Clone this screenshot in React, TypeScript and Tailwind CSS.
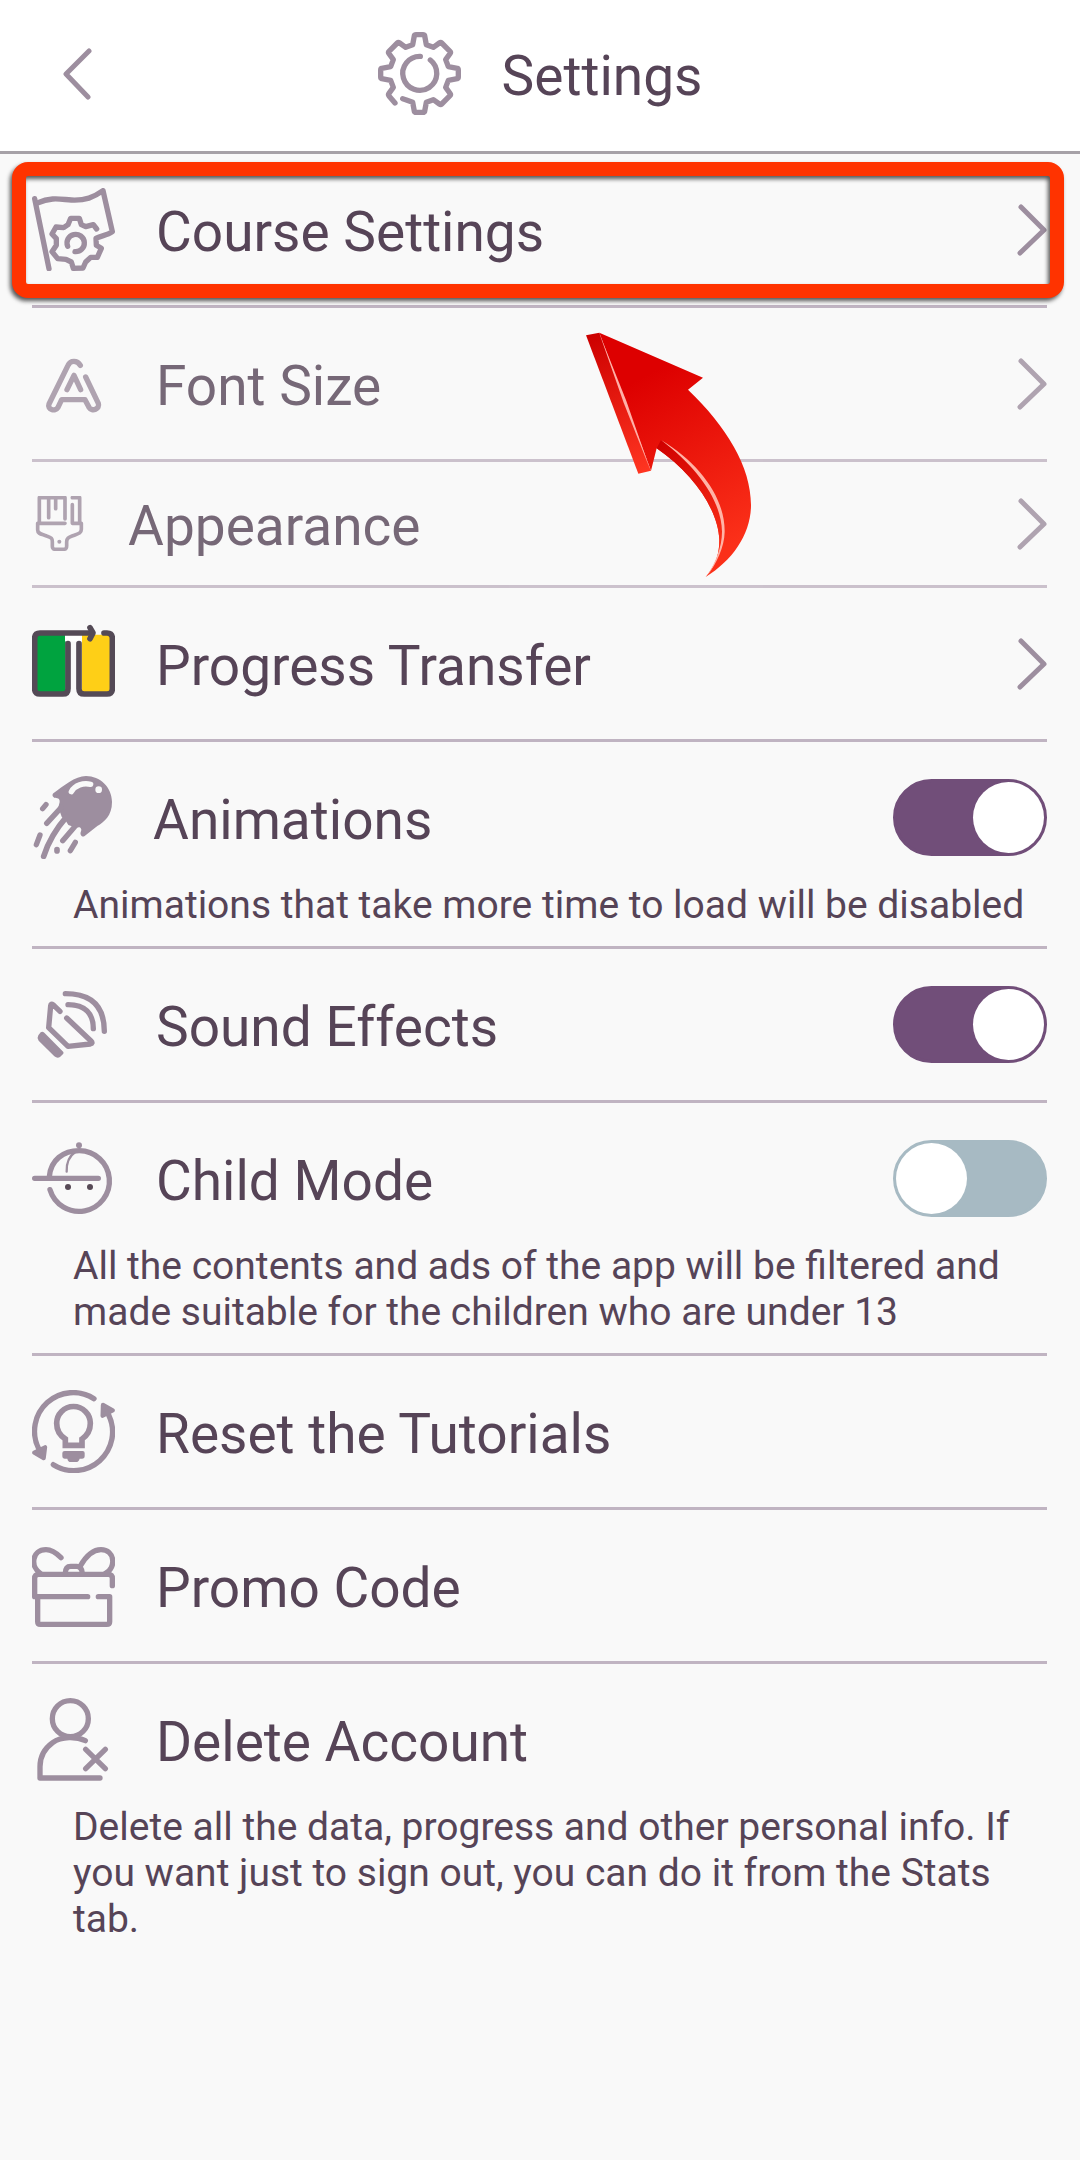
import { FC, ReactNode, useState } from "react";

// ICONS

interface IconProps {
    viewBox: string;
    className?: string;
    children: ReactNode;
}

const Icon: FC<IconProps> = ({ viewBox, className = "w-[83px] h-[83px]", children }) => (
    <svg
        viewBox={viewBox}
        className={`shrink-0 ${className}`}
        fill="none"
        stroke="#9d8e9f"
        strokeWidth="16"
        strokeLinecap="round"
        strokeLinejoin="round"
        aria-hidden="true"
    >
        {children}
    </svg>
);

const GearIcon = () => (
    <Icon viewBox="0 0 249 249">
        <path d="M74 200L83 203L104 211L109 238Q110 241 114 241H135Q139 241 140 238L145 211L166 203L184 216Q188 219 191 216L216 191Q219 188 216 184L203 166L211 145L238 140Q241 139 241 135V114Q241 110 238 109L211 104L203 83L216 65Q219 61 216 58L191 33Q188 30 184 33L166 46L145 38L140 11Q139 8 135 8H114Q110 8 109 11L104 38L83 46L65 33Q61 30 58 33L33 58Q30 61 33 65L46 83L38 104L11 109Q8 110 8 114V135Q8 139 11 140L38 145L46 166L33 184Q30 188 33 192L51 213" />
        <path d="M157 84A51 51 0 1 1 127 73" />
    </Icon>
);

const CourseIcon = () => (
    <Icon viewBox="0 0 249 249">
        <path d="M8 32L51 242" />
        <path d="M16 45C60 26 85 34 118 36C160 38 185 28 213 8L241 131C225 143 205 143 192 151L193 172L208 181L196 208L176 208L161 222L153 240L124 241L118 222L102 214L77 212L60 191L73 172L73 152L60 138L72 117L95 119L108 110L116 91H142L148 110L161 116L184 110L194 123" />
        <path d="M107 175A26 26 0 1 1 129 191" />
    </Icon>
);

const FontIcon = () => (
    <Icon viewBox="96 66 249 249">
        <path d="M241 136C232 120 211 120 204 136L147 252C141 268 165 277 174 262L185 239H255L267 262C276 277 301 266 295 250L257 171" />
        <path d="M201 209L222 166L242 209" />
    </Icon>
);

const BrushIcon = () => (
    <Icon viewBox="96 528 165 165" className="w-[55px] h-[55px]">
        <g strokeWidth="11">
            <path d="M118 606V533H195V597M146 535V593M167 535V566" />
            <path d="M195 610H113V630C113 642 125 642 140 648C155 653 157 656 157 665V678C157 686 160 688 167 688H190C198 688 200 685 200 677V665C200 655 205 652 218 647C235 641 244 640 244 628V610H217V554" />
            <path d="M217 533H239V606" />
        </g>
        <circle cx="178" cy="665" r="6" fill="#9d8e9f" stroke="none" />
    </Icon>
);

const TransferIcon = () => (
    <Icon viewBox="96 66 249 249">
        <g stroke="none">
            <path d="M108 104H197V276H108Z" fill="#00a33f" />
            <path d="M195 104H248V124H195Z" fill="#ffffff" />
            <path d="M246 104H332V276H246Z" fill="#fecf17" />
        </g>
        <g stroke="#544a56" strokeWidth="17">
            <path d="M204 131V266Q204 282 188 282H120Q104 282 104 266V115Q104 99 120 99H276" />
            <path d="M270 83L279 99L270 116" />
            <path d="M237 131V266Q237 282 253 282H321Q337 282 337 266V115Q337 99 321 99H312" />
        </g>
    </Icon>
);

const MeteorIcon = () => (
    <Icon viewBox="96 528 240 249" className="w-20 h-[83px]">
        <path
            d="M160 580C190 558 225 528 258 528C300 528 336 562 336 606C336 648 312 666 292 678L254 708C246 714 238 704 243 694C247 684 238 678 230 684L205 675L198 664L185 650L180 636L172 634L179 606C180 590 165 597 161 592C156 588 157 583 160 580Z"
            fill="#9d8e9f"
            stroke="none"
        />
        <path d="M184 622L140 670M224 680L188 722M138 614L128 626M120 705L109 734M226 727L211 752" />
        <path d="M200 650C165 690 145 725 131 769M171 749V753" strokeWidth="17" />
        <path d="M214 575C225 555 250 548 272 553" stroke="#f9f9f9" />
        <circle cx="296" cy="569" r="10" fill="#f9f9f9" stroke="none" />
    </Icon>
);

const SoundIcon = () => (
    <Icon viewBox="96 69 249 249">
        <path d="M180 154L159 134Q153 130 152 137L146 203L204 259L271 252Q280 250 273 243L200 174" />
        <path d="M204 134C255 134 280 160 280 206M196 101C275 101 313 140 313 214" />
        <path
            d="M122 217L115 226Q110 234 116 242L163 289Q172 296 180 291L190 281Q192 277 188 274L133 218Q127 213 122 217Z"
            fill="#9d8e9f"
            stroke="none"
        />
    </Icon>
);

const ChildIcon = () => (
    <Icon viewBox="96 531 249 249">
        <path d="M148 650C152 600 190 572 238 572A91 91 0 1 1 150 689M104 655H295" />
        <path d="M226 576C205 590 199 610 200 635" strokeWidth="7" />
        <circle cx="237" cy="556" r="9" fill="#9d8e9f" stroke="none" />
        <g fill="#574a56" stroke="none">
            <circle cx="204" cy="681" r="9" />
            <circle cx="270" cy="681" r="9" />
        </g>
    </Icon>
);

const ResetIcon = () => (
    <Icon viewBox="96 60 249 249">
        <path d="M282 86A116 116 0 0 0 116 236M326 135A116 116 0 0 1 160 284" />
        <path d="M103 248L135 232L131 264ZM309 105L338 121L308 137Z" fill="#9d8e9f" strokeWidth="13" />
        <path
            d="M196 226V207C180 197 170 179 170 160A50 50 0 1 1 271 160C271 179 261 197 246 207V226Z"
            strokeWidth="17"
            strokeLinejoin="miter"
        />
        <path
            d="M194 243H248Q254 243 254 249V258Q254 266 246 266H239Q236 276 228 276H212Q204 276 202 266H195Q187 266 187 258V249Q187 243 194 243Z"
            fill="#9d8e9f"
            stroke="none"
        />
    </Icon>
);

const GiftIcon = () => (
    <Icon viewBox="96 522 249 249">
        <path d="M337 647V625Q337 613 325 613H116Q104 613 104 625V680H263" />
        <path d="M113 682V755Q113 763 121 763H320Q329 763 329 755V680H295" />
        <path d="M183 563C165 545 150 539 138 539C95 539 90 590 122 611M241 588C260 555 280 539 303 539C345 539 350 595 315 611" />
        <path d="M196 610C196 595 203 589 212 589H230C240 589 246 597 247 610" />
    </Icon>
);

const DeleteIcon = () => (
    <Icon viewBox="96 114 249 249">
        <circle cx="211" cy="176" r="54" />
        <path d="M256 242C230 230 185 228 158 248C130 268 120 290 120 320V354H300" />
        <path d="M257 268L316 326M316 268L257 326" />
    </Icon>
);

const Chevron: FC<{ left?: boolean }> = ({ left = false }) => (
    <svg
        viewBox="0 0 30 52"
        className="w-[30px] h-[52px] shrink-0"
        fill="none"
        stroke="#9d8e9f"
        strokeWidth="5"
        strokeLinecap="round"
        strokeLinejoin="round"
        aria-hidden="true"
    >
        {left ? <path d="M27 3L4 26L26 49" /> : <path d="M4 3L27 26L3 49" />}
    </svg>
);

const Arrow = () => (
    <svg viewBox="0 0 660 870" className="absolute left-1/2 top-0.5 ml-5 w-[220px] h-[290px] z-10 pointer-events-none" aria-hidden="true">
        <defs>
            <linearGradient id="arrowFront" x1="250" y1="200" x2="520" y2="700" gradientUnits="userSpaceOnUse">
                <stop offset="0" stopColor="#dd0000" />
                <stop offset="1" stopColor="#fb3019" />
            </linearGradient>
            <linearGradient id="arrowSide" x1="100" y1="70" x2="250" y2="490" gradientUnits="userSpaceOnUse">
                <stop offset="0" stopColor="#cc0000" />
                <stop offset="1" stopColor="#ff3521" />
            </linearGradient>
            <linearGradient id="arrowEdge" x1="290" y1="400" x2="470" y2="700" gradientUnits="userSpaceOnUse">
                <stop offset="0" stopColor="#cf0000" />
                <stop offset="1" stopColor="#f92d17" />
            </linearGradient>
        </defs>
        <path d="M118 68L429 203L384 239C500 350 573 470 573 585C573 670 520 750 437 801C465 765 478 740 478 690C475 600 400 490 290 415L273 482Z" fill="url(#arrowFront)" />
        <path d="M303 390C410 460 490 560 491 660C491 710 470 760 437 801C465 765 478 740 478 690C475 600 400 490 290 415Z" fill="url(#arrowEdge)" />
        <path d="M78 76L118 68L273 482L235 491Z" fill="url(#arrowSide)" />
        <path d="M118 70L199 273L271 480L191 278Z" fill="#ffb0a8" />
        <path d="M303 390C420 460 495 565 494 665C493 712 470 760 440 799C466 758 486 712 486 665C484 570 410 470 303 390Z" fill="#ffb3a6" />
    </svg>
);

// ROWS

interface RowProps {
    icon: ReactNode;
    label: string;
    description?: string;
    variant?: "link" | "toggle" | "action";
    defaultChecked?: boolean;
    dimmed?: boolean;
    last?: boolean;
    children?: ReactNode;
}

const Row: FC<RowProps> = ({ icon, label, description, variant = "action", defaultChecked = false, dimmed = false, last = false, children }) => {
    const [checked, setChecked] = useState(defaultChecked);

    const content = (
        <>
            {icon}
            <span className="flex-1 pt-1 text-[55px] leading-[50px]">{label}</span>
        </>
    );

    return (
        <li className="relative">
            <div className={`${last ? "" : "border-b-3 border-[#c0b4c2]"} ${dimmed ? "opacity-80" : ""}`}>
                {variant === "toggle" ? (
                    <label className={`flex items-center gap-[41px] pt-[34px] ${description ? "" : "pb-[34px]"}`}>
                        {content}
                        <input
                            type="checkbox"
                            role="switch"
                            checked={checked}
                            onChange={(e) => setChecked(e.target.checked)}
                            className="flex appearance-none w-[154px] h-[77px] shrink-0 rounded-full border-3 border-[#a7bac3] bg-[#a7bac3] checked:border-[#714e79] checked:bg-[#714e79] checked:justify-end before:block before:w-[71px] before:h-[71px] before:rounded-full before:bg-white"
                        />
                    </label>
                ) : (
                    <button type="button" className={`flex w-full items-center gap-[41px] pt-[34px] text-left ${description ? "" : "pb-[34px]"}`}>
                        {content}
                        {variant === "link" && <Chevron />}
                    </button>
                )}
                {description && (
                    <p className="pl-[41px] pt-[23px] pb-[18px] text-[39px] leading-[46px]">{description}</p>
                )}
            </div>
            {children}
        </li>
    );
};

const App: FC = () => {
    return (
        <div className="min-h-screen bg-[#f9f9f9] text-[#564457] font-[Roboto,sans-serif]">
            <header className="grid grid-cols-[1fr_auto_1fr] items-center border-b-3 border-[#a6a1a7] bg-white px-[62px] pt-8 pb-9">
                <button type="button" aria-label="Back" className="justify-self-start">
                    <Chevron left />
                </button>
                <div className="flex items-center gap-[41px]">
                    <GearIcon />
                    <h1 className="pt-1 text-[55px] leading-[50px]">Settings</h1>
                </div>
            </header>

            <main>
                <ul className="pl-8 pr-[33px]">
                    <Row icon={<CourseIcon />} label="Course Settings" variant="link">
                        <div className="absolute -left-5 -right-[17px] top-2 bottom-2.5 rounded-2xl border-14 border-[#ff3300] drop-shadow-[-2px_3px_2px_rgba(0,0,0,0.65)] pointer-events-none" />
                    </Row>
                    <Row icon={<FontIcon />} label="Font Size" variant="link" dimmed>
                        <Arrow />
                    </Row>
                    <Row icon={<BrushIcon />} label="Appearance" variant="link" dimmed />
                    <Row icon={<TransferIcon />} label="Progress Transfer" variant="link" />
                    <Row
                        icon={<MeteorIcon />}
                        label="Animations"
                        variant="toggle"
                        defaultChecked
                        description="Animations that take more time to load will be disabled"
                    />
                    <Row icon={<SoundIcon />} label="Sound Effects" variant="toggle" defaultChecked />
                    <Row
                        icon={<ChildIcon />}
                        label="Child Mode"
                        variant="toggle"
                        description="All the contents and ads of the app will be filtered and made suitable for the children who are under 13"
                    />
                    <Row icon={<ResetIcon />} label="Reset the Tutorials" />
                    <Row icon={<GiftIcon />} label="Promo Code" />
                    <Row
                        icon={<DeleteIcon />}
                        label="Delete Account"
                        description="Delete all the data, progress and other personal info. If you want just to sign out, you can do it from the Stats tab."
                        last
                    />
                </ul>
            </main>
        </div>
    );
};

export default App;
